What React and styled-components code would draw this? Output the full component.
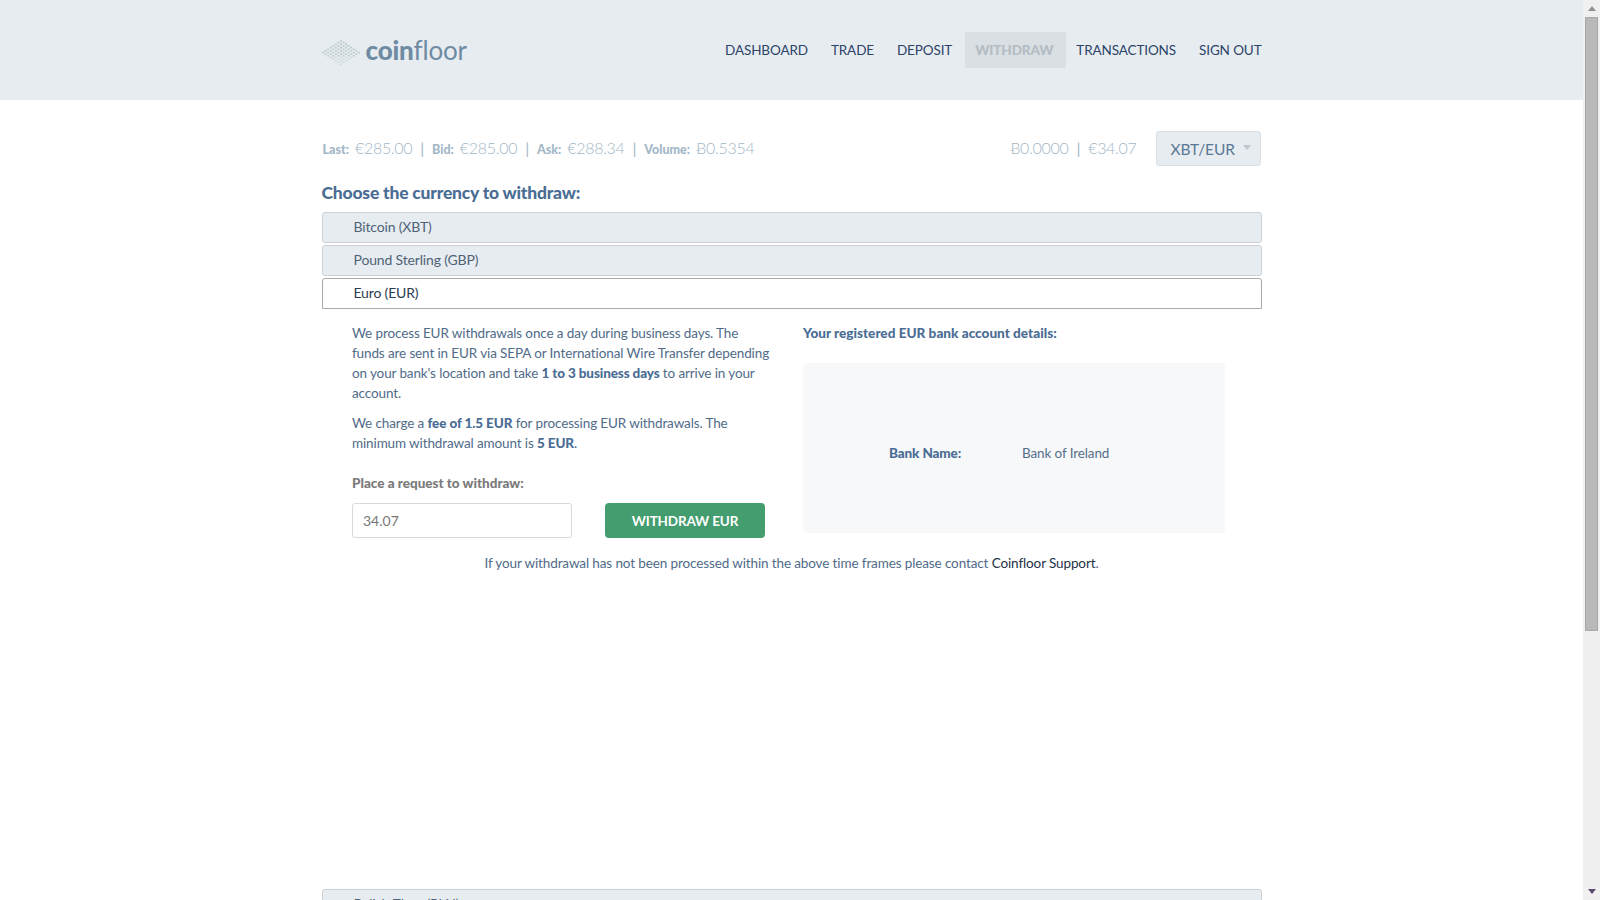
import React from "react";
import styled, { createGlobalStyle } from "styled-components";

const GlobalStyle = createGlobalStyle`
  html, body {
    margin: 0;
    height: 100%;
    overflow: hidden;
    background: #fff;
  }
  body {
    font-family: Lato, "Noto Sans", sans-serif;
    font-size: 13.5px;
    letter-spacing: -0.12px;
    color: #506b88;
  }
`;

const Window = styled.div`
  display: flex;
  height: 900px;
  overflow: hidden;
`;

const Page = styled.div`
  flex: 1;
  min-width: 0;
`;

const Header = styled.header`
  height: 100px;
  background: #e7ecf0;
`;

const Container = styled.div`
  width: 940px;
  margin: 0 auto;
`;

const HeaderInner = styled(Container)`
  display: flex;
  align-items: center;
  justify-content: space-between;
  height: 100px;
`;

const Logo = styled.div`
  display: flex;
  align-items: center;
  gap: 6px;
  color: #6f8ba3;
  font-size: 26px;
  letter-spacing: -0.2px;
  line-height: 1;
`;

const LogoStrong = styled.span`
  font-weight: 900;
`;

const LogoLight = styled.span`
  font-weight: 400;
`;

const Nav = styled.nav`
  display: flex;
  align-items: center;
`;

const NavItem = styled.a`
  display: block;
  height: 36px;
  line-height: 36px;
  padding: 0 13px 0 10px;
  color: ${(p) => (p.$active ? "#b4bcc4" : "#2b4468")};
  font-weight: ${(p) => (p.$active ? 900 : 400)};
  background: ${(p) => (p.$active ? "#d9dfe3" : "transparent")};

  &:last-child {
    padding-right: 0;
  }
`;

const Ticker = styled.div`
  display: flex;
  align-items: center;
  justify-content: space-between;
  margin-top: 31px;
  height: 35px;
  padding: 0 1px;
`;

const TickerGroup = styled.div`
  display: flex;
  align-items: baseline;
  margin-bottom: 2px;
  color: #a3b7c7;
  font-size: 16px;
  letter-spacing: -0.3px;
  font-weight: 300;
`;

const TickerLabel = styled.b`
  font-size: 12.5px;
  letter-spacing: 0;
  font-weight: 900;
  margin-right: 6px;
`;

const Divider = styled.span`
  margin: 0 8px;
  font-weight: 400;
`;

const Balance = styled.div`
  display: flex;
  align-items: center;
  gap: 19px;
`;

const PairButton = styled.div`
  display: flex;
  align-items: center;
  width: 105px;
  height: 35px;
  box-sizing: border-box;
  padding-left: 14px;
  gap: 8px;
  background: #e7ecf0;
  border: 1px solid #d8dee3;
  border-radius: 3px;
  color: #5a7896;
  font-size: 15.5px;
`;

const Caret = styled.span`
  width: 0;
  height: 0;
  margin-top: -3px;
  border-left: 4.5px solid transparent;
  border-right: 4.5px solid transparent;
  border-top: 5px solid #bfc7ce;
`;

const Heading = styled.h2`
  margin: 16px 0 0;
  height: 30px;
  line-height: 21px;
  font-size: 17.5px;
  letter-spacing: -0.2px;
  font-weight: 900;
  color: #4a6d94;
`;

const Accordion = styled.div`
  display: flex;
  flex-direction: column;
  gap: 2px;
`;

const Row = styled.div`
  box-sizing: border-box;
  height: 31px;
  line-height: 28px;
  padding-left: 31px;
  overflow: hidden;
  font-size: 14px;
  letter-spacing: -0.16px;
  border: 1px solid ${(p) => (p.$open ? "#a9a9a9" : "#cdd1d5")};
  border-radius: ${(p) => (p.$open ? "3px 3px 0 0" : "3px")};
  background: ${(p) => (p.$open ? "#fff" : "#e7ecf0")};
  color: ${(p) => (p.$open ? "#2b3c50" : "#4f6377")};
`;

const Panel = styled.div`
  height: 576px;
  box-sizing: border-box;
  padding: 12px 0 0 30.5px;
`;

const Columns = styled.div`
  display: flex;
`;

const LeftColumn = styled.div`
  width: 451px;
`;

const Para = styled.p`
  margin: 0 0 10px;
  width: 420.5px;
  line-height: 20px;
`;

const Strong = styled.b`
  font-weight: 900;
  color: #4a6d94;
`;

const RequestLabel = styled.div`
  margin-top: 20px;
  line-height: 20px;
  font-weight: 900;
  letter-spacing: 0;
  color: #7a7a7a;
`;

const RequestRow = styled.div`
  display: flex;
  gap: 33px;
  margin-top: 10px;
`;

const AmountInput = styled.input`
  box-sizing: border-box;
  width: 220px;
  height: 35px;
  padding: 0 10px;
  border: 1px solid #d9d9d9;
  border-radius: 3px;
  font-family: inherit;
  font-size: 14px;
  color: #777;
`;

const WithdrawButton = styled.button`
  width: 160px;
  height: 35px;
  border: 0;
  border-radius: 4px;
  background: #449d6e;
  color: #fff;
  font-family: inherit;
  font-size: 13.5px;
  letter-spacing: -0.14px;
  font-weight: 700;
`;

const RightColumn = styled.div`
  width: 422px;
`;

const AccountHeading = styled.div`
  line-height: 20px;
  font-size: 13.6px;
  letter-spacing: 0;
  font-weight: 900;
  color: #4a6d94;
`;

const AccountBox = styled.div`
  display: flex;
  align-items: center;
  box-sizing: border-box;
  height: 170px;
  margin-top: 20px;
  padding: 10px 0 0 86px;
  border-radius: 4px;
  background: #f7f8fa;
`;

const AccountKey = styled.span`
  width: 133px;
  font-weight: 900;
  color: #4a6d94;
`;

const AccountValue = styled.span`
  color: #566f89;
`;

const SupportNote = styled.p`
  margin: 15px 0 0 -30.5px;
  text-align: center;
  line-height: 20px;
`;

const SupportLink = styled.a`
  color: #233246;
`;

const Scrollbar = styled.aside`
  display: flex;
  flex-direction: column;
  align-items: center;
  width: 17px;
  background: #f0f0f0;
`;

const ScrollArrow = styled.svg`
  flex: none;
  margin: 6px 0;
  width: 8px;
  height: 5px;
  fill: ${(p) => p.$color};
`;

const ScrollThumb = styled.div`
  box-sizing: border-box;
  width: 13px;
  height: 614px;
  background: #b9b9b9;
  border: 1px solid #a8a8a8;
`;

const ScrollSpace = styled.div`
  flex: 1;
`;

// diamond made of small squares, lighter towards the front corner
const logoDots = [];
for (let a = 0; a < 8; a++) {
  for (let b = 0; b < 8; b++) {
    logoDots.push({
      x: 19 + (a - b) * 2.55,
      y: 6 + (a + b) * 1.65,
      o: a + b > 9 ? 0.55 : 1,
    });
  }
}

const LogoMark = () => (
  <svg width="38" height="30" viewBox="0 0 38 30">
    {logoDots.map((d, i) => (
      <rect
        key={i}
        x={d.x - 1}
        y={d.y - 0.8}
        width="2"
        height="1.6"
        fill="#bccbcb"
        opacity={d.o}
      />
    ))}
  </svg>
);

const navItems = ["DASHBOARD", "TRADE", "DEPOSIT", "WITHDRAW", "TRANSACTIONS", "SIGN OUT"];

const App = () => (
  <Window>
    <GlobalStyle />
    <Page>
      <Header>
        <HeaderInner>
          <Logo>
            <LogoMark />
            <div>
              <LogoStrong>coin</LogoStrong>
              <LogoLight>floor</LogoLight>
            </div>
          </Logo>
          <Nav>
            {navItems.map((item) => (
              <NavItem key={item} $active={item === "WITHDRAW"}>
                {item}
              </NavItem>
            ))}
          </Nav>
        </HeaderInner>
      </Header>
      <Container>
        <Ticker>
          <TickerGroup>
            <TickerLabel>Last:</TickerLabel>€285.00
            <Divider>|</Divider>
            <TickerLabel>Bid:</TickerLabel>€285.00
            <Divider>|</Divider>
            <TickerLabel>Ask:</TickerLabel>€288.34
            <Divider>|</Divider>
            <TickerLabel>Volume:</TickerLabel>Ƀ0.5354
          </TickerGroup>
          <Balance>
            <TickerGroup>
              Ƀ0.0000
              <Divider>|</Divider>
              €34.07
            </TickerGroup>
            <PairButton>
              XBT/EUR
              <Caret />
            </PairButton>
          </Balance>
        </Ticker>
        <Heading>Choose the currency to withdraw:</Heading>
        <Accordion>
          <Row>Bitcoin (XBT)</Row>
          <Row>Pound Sterling (GBP)</Row>
          <Row $open>Euro (EUR)</Row>
          <Panel>
            <Columns>
              <LeftColumn>
                <Para>
                  We process EUR withdrawals once a day during business days. The funds are sent in
                  EUR via SEPA or International Wire Transfer depending on your bank's location and
                  take <Strong>1 to 3 business days</Strong> to arrive in your account.
                </Para>
                <Para>
                  We charge a <Strong>fee of 1.5 EUR</Strong> for processing EUR withdrawals. The
                  minimum withdrawal amount is <Strong>5 EUR</Strong>.
                </Para>
                <RequestLabel>Place a request to withdraw:</RequestLabel>
                <RequestRow>
                  <AmountInput defaultValue="34.07" />
                  <WithdrawButton>WITHDRAW EUR</WithdrawButton>
                </RequestRow>
              </LeftColumn>
              <RightColumn>
                <AccountHeading>Your registered EUR bank account details:</AccountHeading>
                <AccountBox>
                  <AccountKey>Bank Name:</AccountKey>
                  <AccountValue>Bank of Ireland</AccountValue>
                </AccountBox>
              </RightColumn>
            </Columns>
            <SupportNote>
              If your withdrawal has not been processed within the above time frames please contact{" "}
              <SupportLink>Coinfloor Support</SupportLink>.
            </SupportNote>
          </Panel>
          <Row>Polish Zloty (PLN)</Row>
        </Accordion>
      </Container>
    </Page>
    <Scrollbar>
      <ScrollArrow $color="#8f8f8f" viewBox="0 0 8 5">
        <path d="M4 0L8 5H0z" />
      </ScrollArrow>
      <ScrollThumb />
      <ScrollSpace />
      <ScrollArrow $color="#5b4a6b" viewBox="0 0 8 5">
        <path d="M0 0H8L4 5z" />
      </ScrollArrow>
    </Scrollbar>
  </Window>
);

export default App;
